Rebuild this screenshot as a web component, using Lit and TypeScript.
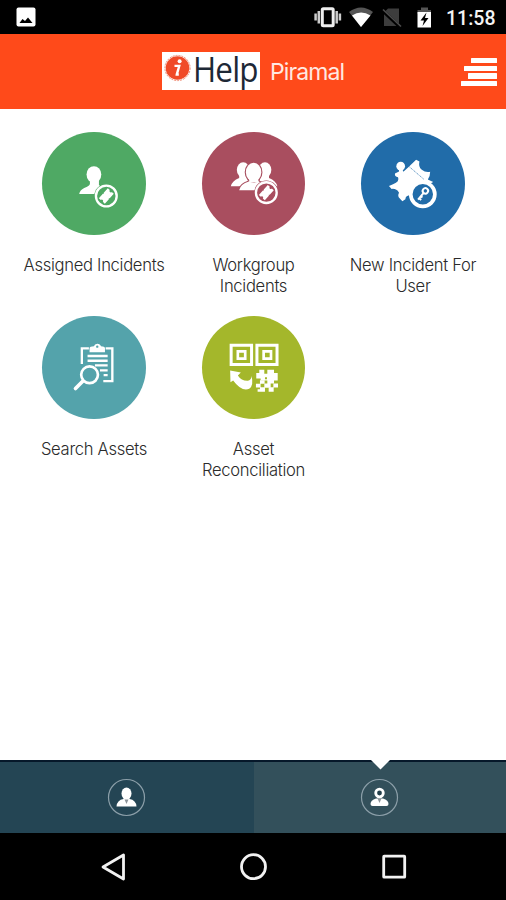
import { LitElement, html, css, svg } from "lit";
import { customElement } from "lit/decorators.js";

const ticketBadge = (cx: number, cy: number, bg: string) => svg`
  <circle cx=${cx} cy=${cy} r="36" fill=${bg}/>
  <circle cx=${cx} cy=${cy} r="31" fill="none" stroke="#fff" stroke-width="7"/>
  <g transform="translate(${cx} ${cy}) rotate(-48)">
    <path d="M-20 -12H-2L0 -10L2 -12H20V-4A4 4 0 0 0 20 4V12H2L0 10L-2 12H-20V4A4 4 0 0 0 -20 -4Z" fill="#fff"/>
  </g>`;

const assigned = svg`
  <ellipse cx="193" cy="163" rx="22" ry="25" fill="#fff"/>
  <path d="M181 178V191Q180 197 164 203Q151 209 149 221H234V208Q213 200 208 194V178Z" fill="#fff"/>
  ${ticketBadge(230, 227, "#4fa964")}`;

const workgroup = svg`
  <g fill="#fff">
    <ellipse cx="159" cy="149" rx="19" ry="23"/>
    <path d="M147 162V173Q126 181 122 198H185V162Z"/>
    <ellipse cx="224" cy="149" rx="19" ry="23"/>
    <path d="M236 162V173Q257 181 261 198H200V162Z"/>
  </g>
  <g fill="#fff" stroke="#a94e5f" stroke-width="7" paint-order="stroke">
    <path d="M176 174V184Q150 192 147 210H235Q231 192 205 184V174Z"/>
    <ellipse cx="190" cy="156" rx="23" ry="28"/>
  </g>
  <path d="M177 170V187H204V170Z" fill="#fff"/>
  ${ticketBadge(228, 217, "#a94e5f")}`;

const newIncident = svg`
  <g fill="#fff">
    <circle cx="183" cy="138" r="13"/>
    <path d="M178 147V154L166 160Q164 166 169 169L175 171Q181 184 160 192L148 197L156 206Q170 204 178 217Q173 226 179 233L188 243L197 237Q197 225 213 224L280 185L264 178Q271 170 271 155Q257 158 246 149Q235 140 239 124L229 119L205 142L191 155L188 147Z"/>
  </g>
  <path d="M209 140L252 177" stroke="#216ca9" stroke-width="2" stroke-dasharray="4 2"/>
  <circle cx="249" cy="222" r="36" fill="#216ca9" stroke="#fff" stroke-width="11"/>
  <g transform="translate(249 221) rotate(40)">
    <circle cx="0" cy="-12" r="8" fill="none" stroke="#fff" stroke-width="6"/>
    <path d="M0 -4V22M0 17H8M0 9H6" stroke="#fff" stroke-width="6" fill="none"/>
  </g>`;

const searchAssets = svg`
  <path d="M178 113H157V160M228 113H248V211H221" fill="none" stroke="#fff" stroke-width="7"/>
  <path d="M180 125V112Q181 108 193 107Q195 99 203 99Q212 99 214 107Q225 108 226 112V125Z" fill="#fff"/>
  <circle cx="203" cy="108" r="3.500" fill="#54a3ab"/>
  <path d="M174 136H234M174 150H234M196 164H234M211 179H234M222 193H234" stroke="#fff" stroke-width="7"/>
  <path d="M161 210L138 233" stroke="#fff" stroke-width="11" stroke-linecap="round"/>
  <circle cx="180" cy="192" r="25" fill="#54a3ab" stroke="#fff" stroke-width="8"/>`;

const reconcile = svg`
  <g fill="none" stroke="#fff">
    <path d="M123 104H184V161H123ZM200 104H260V161H200Z" stroke-width="9"/>
    <path d="M143 122H165V144H143ZM220 122H242V144H220Z" stroke-width="8"/>
  </g>
  <g fill="#fff">
    <path d="M120 179L152 185L143 194Q154 211 173 210Q183 209 184 196Q191 225 177 234Q155 244 129 209L121 214Z"/>
    <path d="M207 177H222V189H231V177H251V187H262V209H251V218H241V231H222V218H231V209H211V203H198V187H207Z"/>
    <path d="M209 208H223V219H209ZM197 219H211V230H197ZM209 229H224V243H202V235H209ZM249 218H263V230H249ZM235 229H250V243H235Z"/>
  </g>
  <path d="M224 199H230V205H224Z" fill="#a4b72b"/>`;

const tiles = [
  { tone: "green", box: "38 36 309 309", icon: assigned, label: ["Assigned Incidents"] },
  { tone: "rose", box: "36 36 309 309", icon: workgroup, label: ["Workgroup", "Incidents"] },
  { tone: "blue", box: "64.5 36 309 309", icon: newIncident, label: ["New Incident For", "User"] },
  { tone: "teal", box: "38 16.500 309 309", icon: searchAssets, label: ["Search Assets"] },
  { tone: "lime", box: "36 16.500 309 309", icon: reconcile, label: ["Asset", "Reconciliation"] },
];

@customElement("status-bar")
class StatusBar extends LitElement {
  static styles = css`
    :host { display: block; height: 34px; background: #000; }
    .bar { display: flex; justify-content: space-between; height: 34px; }
    .right { display: flex; }
    .clock { width: 60px; padding-top: 8px; font: 500 19.500px/21px Roboto, sans-serif; letter-spacing: 0; color: #f4f4f4; white-space: nowrap; }
  `;
  render() {
    return html`<div class="bar">
      <svg width="60" height="34" viewBox="0 0 60 34">
        <rect x="16.500" y="7.500" width="19" height="19" rx="2" fill="#fff"/>
        <path d="M19.500 23L22.500 19L25 21L28 17.500L32.500 23Z" fill="#000"/>
      </svg>
      <div class="right">
        <svg width="146" height="34" viewBox="300 0 146 34">
          <path d="M315.600 13.500V20.500M318.800 11V23.500M339.900 13.500V20.500M336.700 11V23.500" stroke="#ccc" stroke-width="2.500"/>
          <rect x="322.300" y="8.800" width="10.900" height="17" rx="1" fill="#000" stroke="#eee" stroke-width="3"/>
          <path d="M349 12Q361 3 373 12L361 27Z" fill="#555"/>
          <path d="M352 15.500Q361 9.500 370.500 15.500L361 27Z" fill="#fff"/>
          <path d="M388 8.500H399V26H384V12.500Z" fill="#3d3d3d"/>
          <path d="M382 10L400 27" stroke="#000" stroke-width="3.500"/>
          <path d="M383 9.500L401 26.500" stroke="#4c4c4c" stroke-width="1.600"/>
          <path d="M421 7.500H428V10H431V14H417.500V10H421Z" fill="#555"/>
          <path d="M417.500 12H431V27.500H417.500Z" fill="#fff"/>
          <path d="M426.500 12.500L420.500 20.500H424L422.500 26L428.500 18H425Z" fill="#000"/>
        </svg>
        <div class="clock">11:58</div>
      </div>
    </div>`;
  }
}

@customElement("title-bar")
class TitleBar extends LitElement {
  static styles = css`
    :host { display: block; }
    .bar { display: flex; height: 74.500px; background: #ff4a1a; box-sizing: border-box; padding: 18px 8px 0 162px; }
    .logo { display: flex; width: 98px; height: 38px; background: #fff; flex: none; }
    .logo svg { flex: none; }
    .word { font: 400 34px/34px "Open Sans", "Noto Sans", sans-serif; color: #1d2836; letter-spacing: -0.900px; transform-origin: 0 50%; transform: scaleX(0.925); white-space: nowrap; }
    .name { margin: 6px 0 0 10px; font: 400 23px/28px Inter, sans-serif; letter-spacing: -0.900px; color: #ffe9e2; white-space: nowrap; }
    .menu { display: flex; flex-direction: column; align-items: flex-end; gap: 2.200px; margin: 6px 1px 0 auto; }
    .line { height: 5.400px; background: #fff; border-radius: 0.500px; }
    .l1 { width: 26px; }
    .l2 { width: 33.500px; }
    .l3 { width: 29px; }
    .l4 { width: 36px; }
  `;
  render() {
    return html`<div class="bar">
      <div class="logo">
        <svg width="31" height="38" viewBox="0 0 31 38">
          <circle cx="15.500" cy="16" r="12.600" fill="none" stroke="#ef8a72" stroke-width="1" stroke-dasharray="2 1"/>
          <circle cx="15.500" cy="16" r="11.800" fill="#f04a28"/>
          <circle cx="17.600" cy="9.300" r="2" fill="#fff"/>
          <path d="M12.500 13.800H17.300L14.900 22.500H16.800M17.300 13.800L14.500 23.200" fill="none" stroke="#fff" stroke-width="2.300"/>
        </svg>
        <div class="word">Help</div>
      </div>
      <div class="name">Piramal</div>
      <div class="menu"><div class="line l1"></div><div class="line l2"></div><div class="line l3"></div><div class="line l4"></div></div>
    </div>`;
  }
}

@customElement("tab-bar")
class TabBar extends LitElement {
  static styles = css`
    :host { display: block; }
    .tabs { display: grid; grid-template-columns: 253.500px 1fr; height: 73px; box-sizing: border-box; border-top: 2px solid #06182a; }
    .tab { position: relative; display: flex; justify-content: center; padding-top: 16px; background: #244554; }
    .active { background: #33505b; }
    .notch { position: absolute; top: -2px; left: 50%; margin-left: -9px; }
  `;
  render() {
    return html`<div class="tabs">
      <div class="tab">
        <svg width="39" height="39" viewBox="0 0 39 39">
          <circle cx="19.500" cy="19.500" r="18" fill="none" stroke="#8c9fa9" stroke-width="1.200"/>
          <path d="M16.500 19V21Q10 22 9.500 28.500H29.500Q29 22 22.500 21V19Z" fill="#fff"/>
          <ellipse cx="19.500" cy="15.500" rx="5" ry="6" fill="#fff"/>
          <path d="M17.500 21.500L19.500 26L21.500 21.500Z" fill="#8d949a"/>
        </svg>
      </div>
      <div class="tab active">
        <svg class="notch" width="19" height="10" viewBox="0 0 19 10"><path d="M0 0H19L9.500 9.500Z" fill="#fff"/></svg>
        <svg width="39" height="39" viewBox="0 0 39 39">
          <circle cx="19.500" cy="19.500" r="18" fill="none" stroke="#8c9fa9" stroke-width="1.200"/>
          <path d="M16 20.500Q10.500 22 10.500 26Q10.500 28 12.500 28H26.500Q28.500 28 28.500 26Q28.500 22 23 20.500Z" fill="#fff"/>
          <circle cx="19.500" cy="15" r="3.800" fill="#233f4b" stroke="#fff" stroke-width="2.800"/>
          <path d="M17.500 20.500L19.500 25L21.500 20.500Z" fill="#8d949a"/>
        </svg>
      </div>
    </div>`;
  }
}

@customElement("app-root")
class AppRoot extends LitElement {
  static styles = css`
    :host { display: block; }
    .page { display: flex; flex-direction: column; height: 900px; background: #fff; overflow: hidden; }
    .grid { flex: 1; display: grid; grid-template-columns: repeat(3, 159.500px); grid-auto-rows: 184px; align-content: start; padding: 23px 0 0 14.250px; }
    .tile { display: flex; flex-direction: column; align-items: center; }
    .disc { display: block; width: 103.500px; height: 103.500px; border-radius: 50%; }
    .green { background: #4fa964; }
    .rose { background: #a94e5f; }
    .blue { background: #216ca9; }
    .teal { background: #54a3ab; }
    .lime { background: #a4b72b; }
    .label { margin-top: 19.500px; font: 300 16.600px/21.500px Inter, sans-serif; letter-spacing: -0.300px; color: #2a2a2a; text-align: center; white-space: nowrap; }
    .nav { height: 67px; flex: none; background: #000; }
    .nav svg { display: block; }
  `;
  render() {
    return html`<div class="page">
      <status-bar></status-bar>
      <title-bar></title-bar>
      <div class="grid">
        ${tiles.map((t) => html`<div class="tile">
          <svg class="disc ${t.tone}" viewBox=${t.box}>${t.icon}</svg>
          <div class="label">${t.label.map((l) => html`<div>${l}</div>`)}</div>
        </div>`)}
      </div>
      <tab-bar></tab-bar>
      <div class="nav">
        <svg width="506" height="67" viewBox="0 833 506 67" fill="none" stroke="#f2f2f2" stroke-width="2.800" stroke-linejoin="round">
          <path d="M103 867L123.500 855V879Z"/>
          <circle cx="253.500" cy="866.700" r="12"/>
          <rect x="383.700" y="856.200" width="21" height="21" rx="0.500"/>
        </svg>
      </div>
    </div>`;
  }
}
